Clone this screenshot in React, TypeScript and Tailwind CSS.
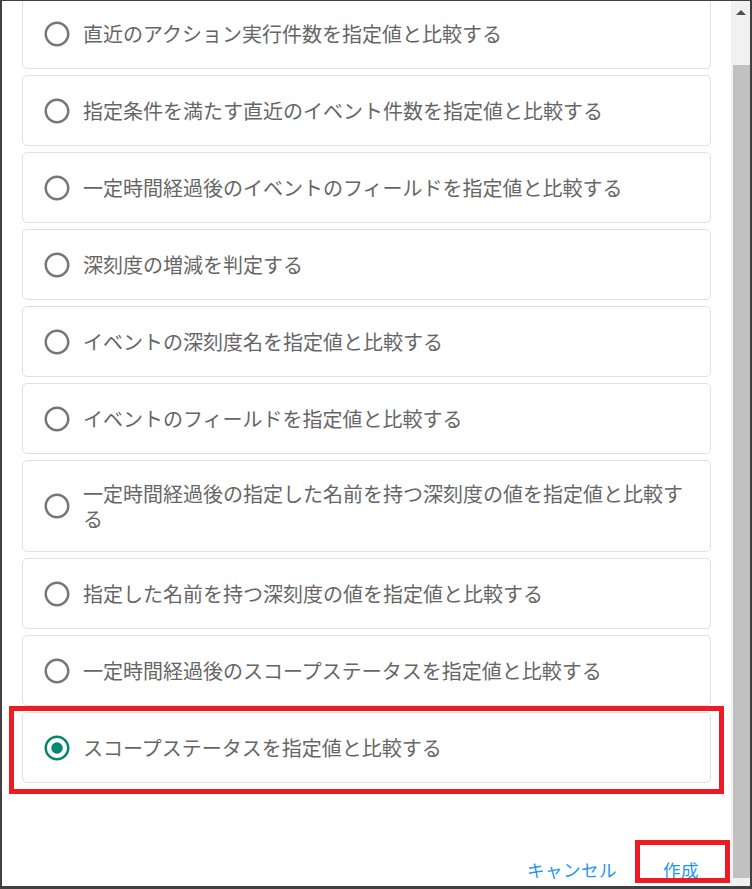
import React from "react";

const options = [
  "直近のアクション実行件数を指定値と比較する",
  "指定条件を満たす直近のイベント件数を指定値と比較する",
  "一定時間経過後のイベントのフィールドを指定値と比較する",
  "深刻度の増減を判定する",
  "イベントの深刻度名を指定値と比較する",
  "イベントのフィールドを指定値と比較する",
  "一定時間経過後の指定した名前を持つ深刻度の値を指定値と比較する",
  "指定した名前を持つ深刻度の値を指定値と比較する",
  "一定時間経過後のスコープステータスを指定値と比較する",
  "スコープステータスを指定値と比較する",
];

const SELECTED = 9;

function RadioIcon({ checked }: { checked: boolean }) {
  return (
    <svg width="30" height="30" viewBox="0 0 24 24" className="shrink-0 -my-[2.5px]">
      <path
        fill={checked ? "#00876c" : "#757575"}
        d="M12 2C6.48 2 2 6.48 2 12s4.48 10 10 10 10-4.48 10-10S17.52 2 12 2zm0 18c-4.42 0-8-3.58-8-8s3.58-8 8-8 8 3.58 8 8-3.58 8-8 8z"
      />
      {checked && <circle cx="12" cy="12" r="4.6" fill="#00876c" />}
    </svg>
  );
}

export default function App() {
  return (
    <div className="relative w-[752px] h-[889px] bg-white border-t border-l-2 border-r-2 border-b-[3px] border-[#404040] flex overflow-hidden font-['Noto_Sans_CJK_JP','Noto_Sans',sans-serif]">
      {/* dialog body */}
      <div className="flex-1 flex flex-col overflow-hidden">
        <div className="flex flex-col gap-[6px] px-[20px] mt-[-3px]">
          {options.map((label, i) => (
            <div
              key={i}
              className="min-h-[71px] py-[20px] border border-[#e0e0e0] rounded-[5px] flex items-center pl-[19px] pr-[16px]"
            >
              <RadioIcon checked={i === SELECTED} />
              <span className="ml-[11px] text-[20px] leading-[25px] text-[#666666]">{label}</span>
            </div>
          ))}
        </div>

        {/* actions */}
        <div className="flex justify-end gap-[14px] pr-[10px] mt-[64px]">
          <button className="px-[10px] py-[7.5px] min-w-[80px] text-[17.5px] leading-[30px] tracking-[0.5px] text-[#2196f3]">
            キャンセル
          </button>
          <button className="px-[10px] py-[7.5px] min-w-[80px] text-[17.5px] leading-[30px] tracking-[0.5px] text-[#2196f3]">
            作成
          </button>
        </div>
      </div>

      {/* scrollbar */}
      <div className="w-[19px] shrink-0 bg-[#f1f1f1] flex flex-col">
        <div className="h-[17px] flex justify-center pt-[9px] pl-[1px]">
          <div className="w-0 h-0 border-l-[5px] border-r-[5px] border-b-[5px] border-l-transparent border-r-transparent border-b-[#505050]" />
        </div>
        <div className="mt-[47px] h-[813px] ml-[2px] bg-[#c1c1c1]" />
      </div>

      {/* annotation highlights */}
      <div className="absolute left-[7px] top-[705px] w-[715px] h-[88px] border-[5px] border-[#ed1c24] pointer-events-none" />
      <div className="absolute left-[633px] top-[839px] w-[95px] h-[43px] border-[5px] border-[#ed1c24] pointer-events-none" />
    </div>
  );
}
